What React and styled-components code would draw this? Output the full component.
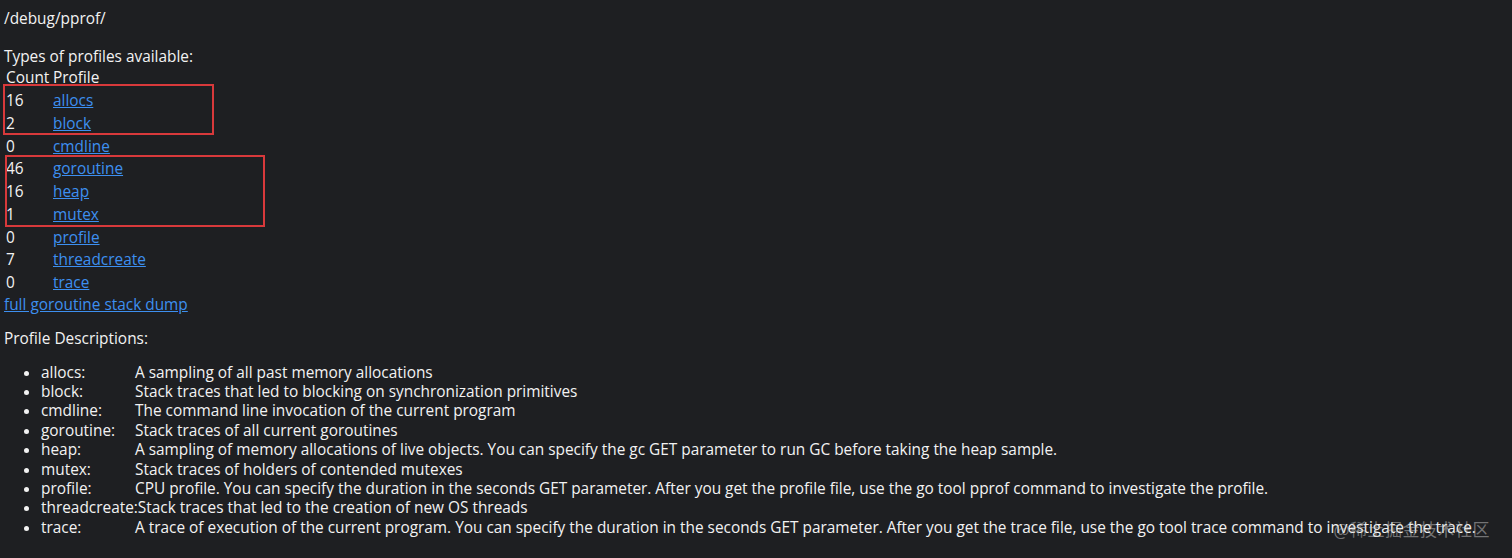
import React from "react";
import styled, { createGlobalStyle } from "styled-components";

const Global = createGlobalStyle`
  html, body { margin: 0; padding: 0; background: #1e1f22; }
  body { color: #f2f2f2; font-family: "Open Sans", "Noto Sans", sans-serif; font-size: 15.4px; }
  #root { min-height: 558px; }
`;

const Page = styled.div`
  position: relative;
  padding: 9px 4px 0 4px;
  height: 549px;
  overflow: hidden;
`;

const Line = styled.div`
  line-height: 20px;
  margin-top: ${(p) => p.$mt || 0}px;
`;

const Link = styled.a`
  color: #3d8ff0;
  text-decoration: underline;
  cursor: pointer;
`;

const TableWrap = styled.div`
  position: relative;
`;

const Table = styled.div`
  display: grid;
  grid-template-columns: 47px auto;
  grid-auto-rows: 22.75px;
  align-items: center;
  padding-left: 2px;
  width: max-content;
`;

const Cell = styled.div`
  line-height: 20px;
  white-space: nowrap;
`;

const Mark = styled.div`
  position: absolute;
  border: 2px solid #d8393b;
  left: ${(p) => p.$x}px;
  top: ${(p) => p.$y}px;
  width: ${(p) => p.$w}px;
  height: ${(p) => p.$h}px;
  box-sizing: border-box;
  pointer-events: none;
`;

const List = styled.ul`
  margin: 14px 0 0 0;
  padding-left: 37px;
  list-style: disc;
`;

const Item = styled.li`
  line-height: 19.4px;
  white-space: nowrap;
`;

const Name = styled.span`
  display: inline-block;
  min-width: 94px;
`;

const Watermark = styled.div`
  position: absolute;
  right: 22px;
  top: 516px;
  font-size: 17px;
  color: rgba(200, 200, 200, 0.5);
  font-family: "Noto Sans CJK SC", "Noto Sans", sans-serif;
  letter-spacing: 0.5px;
`;

const counts = [
  ["16", "allocs"],
  ["2", "block"],
  ["0", "cmdline"],
  ["46", "goroutine"],
  ["16", "heap"],
  ["1", "mutex"],
  ["0", "profile"],
  ["7", "threadcreate"],
  ["0", "trace"],
];

const descs = [
  ["allocs:", "A sampling of all past memory allocations"],
  ["block:", "Stack traces that led to blocking on synchronization primitives"],
  ["cmdline:", "The command line invocation of the current program"],
  ["goroutine:", "Stack traces of all current goroutines"],
  ["heap:", "A sampling of memory allocations of live objects. You can specify the gc GET parameter to run GC before taking the heap sample."],
  ["mutex:", "Stack traces of holders of contended mutexes"],
  ["profile:", "CPU profile. You can specify the duration in the seconds GET parameter. After you get the profile file, use the go tool pprof command to investigate the profile."],
  ["threadcreate:", "Stack traces that led to the creation of new OS threads"],
  ["trace:", "A trace of execution of the current program. You can specify the duration in the seconds GET parameter. After you get the trace file, use the go tool trace command to investigate the trace."],
];

export default function App() {
  return (
    <>
      <Global />
      <Page>
        <Line>/debug/pprof/</Line>
        <Line $mt={18}>Types of profiles available:</Line>
        <TableWrap>
          <Table>
            <Cell>Count</Cell>
            <Cell>Profile</Cell>
            {counts.map(([c, n]) => (
              <React.Fragment key={n}>
                <Cell>{c}</Cell>
                <Cell>
                  <Link>{n}</Link>
                </Cell>
              </React.Fragment>
            ))}
          </Table>
          <Mark $x={-1} $y={17} $w={211} $h={51} />
          <Mark $x={1} $y={88} $w={260} $h={72} />
        </TableWrap>
        <Line $mt={0}>
          <Link>full goroutine stack dump</Link>
        </Line>
        <Line $mt={14}>Profile Descriptions:</Line>
        <List>
          {descs.map(([n, d]) => (
            <Item key={n}>
              <Name>{n}</Name>
              {d}
            </Item>
          ))}
        </List>
        <Watermark>@稀土掘金技术社区</Watermark>
      </Page>
    </>
  );
}
